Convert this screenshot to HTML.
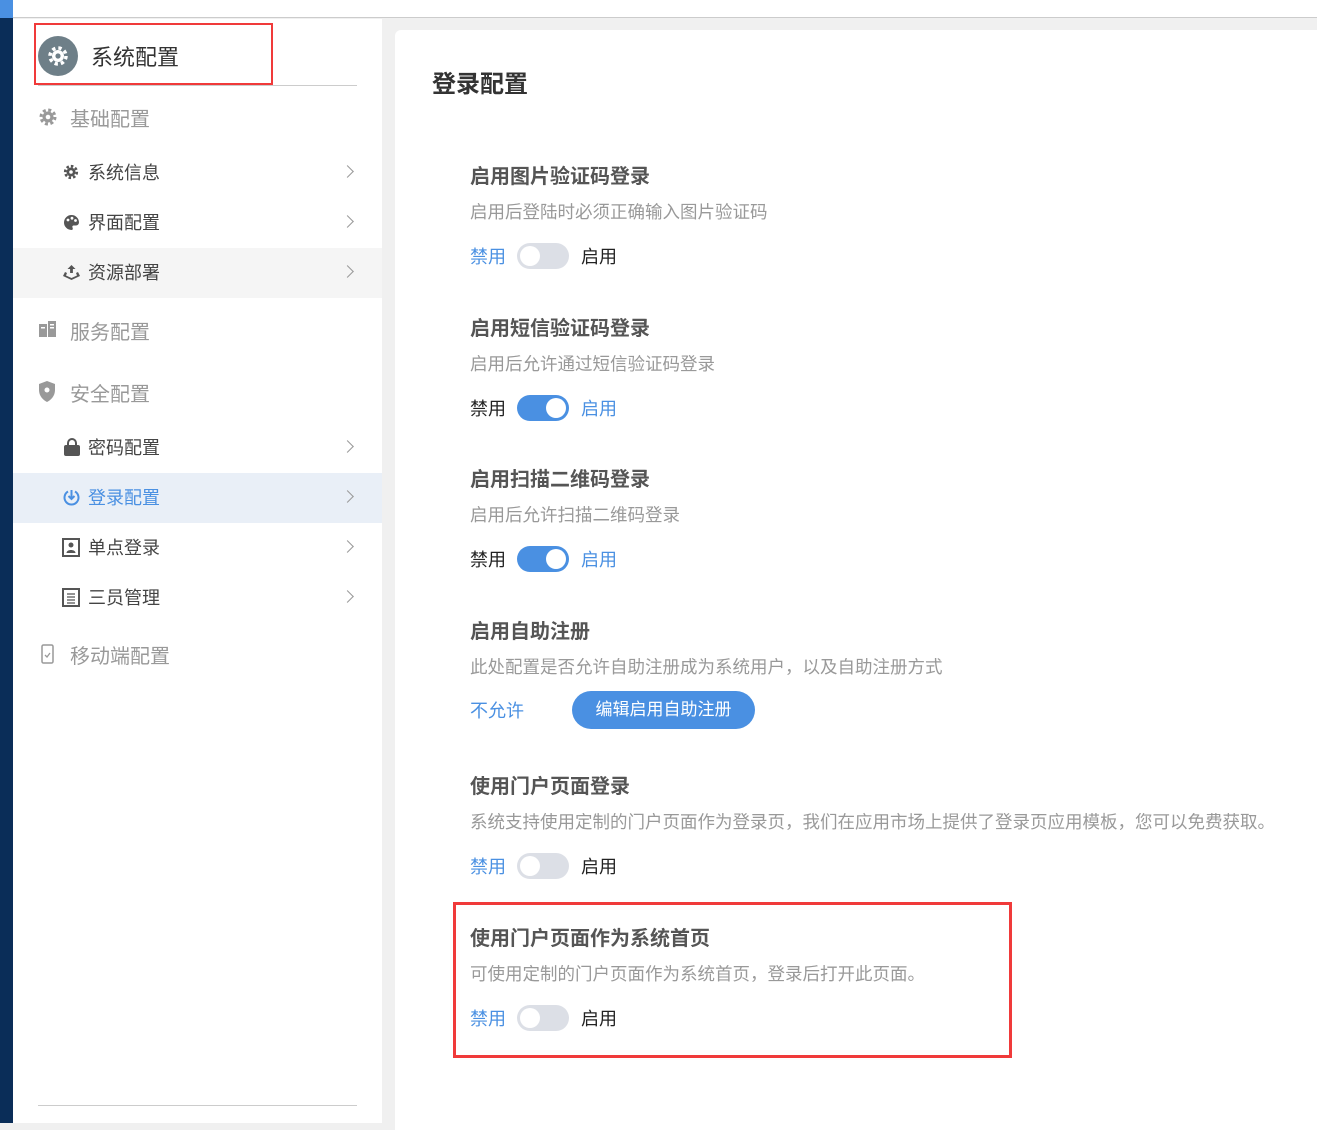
<!DOCTYPE html>
<html><head><meta charset="utf-8"><style>
*{margin:0;padding:0;box-sizing:border-box}
body{width:1317px;height:1123px;position:relative;overflow:hidden;background:#f0f0f0;font-family:"Liberation Sans","Noto Sans CJK SC",sans-serif}
.a{position:absolute;white-space:nowrap}
.si{font-size:18px;color:#444}
.grp{font-size:20px;color:#999}
.chev{position:absolute;left:343px;width:9px;height:9px;border-right:1.5px solid #999;border-top:1.5px solid #999;transform:rotate(45deg)}
.t{font-size:20px;font-weight:bold;color:#555;left:470px}
.d{font-size:17.5px;color:#999;left:470px}
.l{font-size:18px;left:470px}
.r{font-size:18px;left:581px}
.blue{color:#4a90e2}.dark{color:#222}
.tg{position:absolute;left:517px;width:52px;height:26px;border-radius:13px;background:#dcdfe6}
.tg::after{content:"";position:absolute;top:3px;width:20px;height:20px;border-radius:50%;background:#fff}
.off::after{left:3px}.on{background:#4a90e2}.on::after{left:29px}
</style></head><body>
<div class="a" style="left:0;top:0;width:1317px;height:18px;background:#fff;border-bottom:1px solid #ccc"></div>
<div class="a" style="left:0;top:0;width:13px;height:18px;background:#4a90e2"></div>
<div class="a" style="left:0;top:18px;width:13px;height:1105px;background:#0a2d58"></div>
<div class="a" style="left:13px;top:19px;width:369px;height:1104px;background:#fff"></div>
<div class="a" style="left:395px;top:30px;width:930px;height:1100px;background:#fff;border-radius:6px 0 0 0"></div>

<div class="a" style="left:34px;top:23px;width:239px;height:62px;border:2px solid #f03a3a"></div>
<div class="a" style="left:38px;top:85px;width:319px;height:1px;background:#ccc"></div>
<div class="a" style="left:38px;top:36px;width:40px;height:40px;border-radius:50%;background:#6e7f88"></div>
<svg class="a" style="left:46px;top:44px" width="24" height="24" viewBox="-12 -12 24 24"><circle r="6" fill="#fff"/><circle r="8" fill="none" stroke="#fff" stroke-width="3.5" stroke-dasharray="3.3 3"/><circle r="2.6" fill="#6e7f88"/></svg>
<div class="a" style="left:91px;top:40px;font-size:22px;color:#333">系统配置</div>

<svg class="a" style="left:38px;top:107px" width="20" height="20" viewBox="-10 -10 20 20"><circle r="5.5" fill="#999"/><circle r="7" fill="none" stroke="#999" stroke-width="3" stroke-dasharray="3 2.5"/><circle r="2.3" fill="#fff"/></svg>
<div class="a grp" style="left:70px;top:103px">基础配置</div>

<svg class="a" style="left:63px;top:164px" width="16" height="16" viewBox="-8 -8 16 16"><circle r="4.5" fill="#555"/><circle r="5.8" fill="none" stroke="#555" stroke-width="2.6" stroke-dasharray="2.5 2"/><circle r="1.8" fill="#fff"/></svg>
<div class="a si" style="left:88px;top:159px">系统信息</div><div class="chev" style="top:167px"></div>
<svg class="a" style="left:63px;top:214px" width="17" height="17" viewBox="0 0 17 17"><path d="M8.5 1a7.5 7.5 0 1 0 0 15c1.5 0 1.5-1.5 1-2.5s0-2 1.5-2h2A3 3 0 0 0 16 8.5 7.5 7.5 0 0 0 8.5 1z" fill="#555"/><circle cx="5" cy="6" r="1.4" fill="#fff"/><circle cx="9" cy="4.2" r="1.4" fill="#fff"/><circle cx="12.5" cy="6.5" r="1.4" fill="#fff"/></svg>
<div class="a si" style="left:88px;top:209px">界面配置</div><div class="chev" style="top:217px"></div>
<div class="a" style="left:13px;top:248px;width:369px;height:50px;background:#f5f5f5"></div>
<svg class="a" style="left:62px;top:264px" width="19" height="17" viewBox="0 0 19 17"><path d="M9.5 1l-4 4h2.6v4h2.8V5h2.6z" fill="#555"/><path d="M3 8l-2 4 8.5 4 8.5-4-2-4-2 1 1 2.5-5.5 2.5L4 11.5 5 9z" fill="#555"/></svg>
<div class="a si" style="left:88px;top:259px">资源部署</div><div class="chev" style="top:267px"></div>

<svg class="a" style="left:39px;top:320px" width="18" height="18" viewBox="0 0 18 18"><rect x="0" y="4" width="8" height="13" fill="#999"/><rect x="9" y="1" width="8" height="16" fill="#999"/><rect x="11" y="4" width="4" height="1.5" fill="#fff"/><rect x="11" y="7" width="4" height="1.5" fill="#fff"/><rect x="2" y="7" width="4" height="1.5" fill="#fff"/></svg>
<div class="a grp" style="left:70px;top:316px">服务配置</div>
<svg class="a" style="left:38px;top:381px" width="18" height="21" viewBox="0 0 18 21"><path d="M9 0L1 3v6c0 6 4 10 8 12 4-2 8-6 8-12V3z" fill="#999"/><circle cx="9" cy="9" r="2.5" fill="#fff"/></svg>
<div class="a grp" style="left:70px;top:378px">安全配置</div>

<div class="a" style="left:64px;top:445px;width:16px;height:11px;background:#555;border-radius:2px"></div>
<div class="a" style="left:67px;top:438px;width:10px;height:10px;border:2.5px solid #555;border-radius:5px 5px 0 0"></div>
<div class="a si" style="left:88px;top:434px">密码配置</div><div class="chev" style="top:442px"></div>
<div class="a" style="left:13px;top:473px;width:369px;height:50px;background:#e9eff7"></div>
<svg class="a" style="left:62px;top:488px" width="19" height="19" viewBox="0 0 19 19"><path d="M6 3.5a7 7 0 1 0 7 0" fill="none" stroke="#4a90e2" stroke-width="2"/><path d="M9.5 2v9M6.5 8l3 3 3-3" fill="none" stroke="#4a90e2" stroke-width="2"/></svg>
<div class="a si" style="left:88px;top:484px;color:#4a90e2">登录配置</div><div class="chev" style="top:492px"></div>
<svg class="a" style="left:62px;top:538px" width="19" height="19" viewBox="0 0 19 19"><rect x="1" y="1" width="16" height="17" fill="none" stroke="#555" stroke-width="2"/><circle cx="9" cy="7" r="2.5" fill="#555"/><path d="M4.5 15c0-4 9-4 9 0z" fill="#555"/></svg>
<div class="a si" style="left:88px;top:534px">单点登录</div><div class="chev" style="top:542px"></div>
<svg class="a" style="left:62px;top:588px" width="19" height="19" viewBox="0 0 19 19"><rect x="1" y="1" width="16" height="17" fill="none" stroke="#555" stroke-width="2"/><path d="M5 6h8M5 9h8M5 12h8M5 15h8" stroke="#555" stroke-width="1.3"/></svg>
<div class="a si" style="left:88px;top:584px">三员管理</div><div class="chev" style="top:592px"></div>
<svg class="a" style="left:41px;top:644px" width="13" height="20" viewBox="0 0 13 20"><rect x="1" y="1" width="11" height="18" rx="1.5" fill="none" stroke="#999" stroke-width="1.5"/><path d="M4 11l2 2 3-4" fill="none" stroke="#999" stroke-width="1.3"/></svg>
<div class="a grp" style="left:70px;top:640px">移动端配置</div>
<div class="a" style="left:38px;top:1105px;width:319px;height:1px;background:#ccc"></div>

<div class="a" style="left:432px;top:64px;font-size:24px;font-weight:bold;color:#333">登录配置</div>

<div class="a t" style="top:160px">启用图片验证码登录</div>
<div class="a d" style="top:199px">启用后登陆时必须正确输入图片验证码</div>
<div class="a l blue" style="top:243px">禁用</div><div class="tg off" style="top:243px"></div><div class="a r dark" style="top:243px">启用</div>

<div class="a t" style="top:312px">启用短信验证码登录</div>
<div class="a d" style="top:351px">启用后允许通过短信验证码登录</div>
<div class="a l dark" style="top:395px">禁用</div><div class="tg on" style="top:395px"></div><div class="a r blue" style="top:395px">启用</div>

<div class="a t" style="top:463px">启用扫描二维码登录</div>
<div class="a d" style="top:502px">启用后允许扫描二维码登录</div>
<div class="a l dark" style="top:546px">禁用</div><div class="tg on" style="top:546px"></div><div class="a r blue" style="top:546px">启用</div>

<div class="a t" style="top:615px">启用自助注册</div>
<div class="a d" style="top:654px">此处配置是否允许自助注册成为系统用户，以及自助注册方式</div>
<div class="a l blue" style="top:697px">不允许</div>
<div class="a" style="left:572px;top:691px;width:183px;height:38px;border-radius:19px;background:#4a90e2;color:#fff;font-size:17px;line-height:38px;text-align:center">编辑启用自助注册</div>

<div class="a t" style="top:770px">使用门户页面登录</div>
<div class="a d" style="top:809px">系统支持使用定制的门户页面作为登录页，我们在应用市场上提供了登录页应用模板，您可以免费获取。</div>
<div class="a l blue" style="top:853px">禁用</div><div class="tg off" style="top:853px"></div><div class="a r dark" style="top:853px">启用</div>

<div class="a" style="left:453px;top:902px;width:559px;height:156px;border:3px solid #f03a3a"></div>
<div class="a t" style="top:922px">使用门户页面作为系统首页</div>
<div class="a d" style="top:961px">可使用定制的门户页面作为系统首页，登录后打开此页面。</div>
<div class="a l blue" style="top:1005px">禁用</div><div class="tg off" style="top:1005px"></div><div class="a r dark" style="top:1005px">启用</div>
</body></html>
